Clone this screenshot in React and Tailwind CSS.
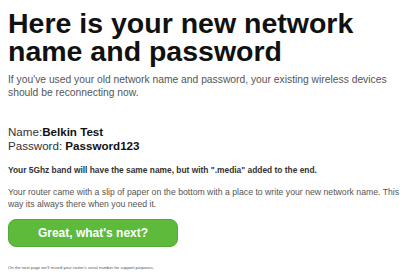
export default function App() {
    return (
        <div className="w-[404px] h-[276px] overflow-hidden bg-white pl-2 pr-[5px] font-['Liberation_Sans',Arial,sans-serif]">
            {/* Heading */}
            <h1 className="pt-[9px] text-[28.5px] leading-[28px] font-bold text-[#111]">
                Here is your new network name and password
            </h1>
            <p className="mt-[9px] text-[10.3px] leading-[12.5px] text-[#555]">
                If you've used your old network name and password, your existing wireless devices should be reconnecting now.
            </p>

            {/* Credentials */}
            <div className="mt-[26px] text-[11.6px] leading-[13.5px] text-[#111]">
                <p>
                    <span className="text-[#333]">Name:</span>
                    <span className="font-bold">Belkin Test</span>
                </p>
                <p>
                    <span className="text-[#333]">Password: </span>
                    <span className="font-bold">Password123</span>
                </p>
            </div>

            <p className="mt-[13px] text-[8.4px] leading-[11px] font-bold text-[#333]">
                Your 5Ghz band will have the same name, but with ".media" added to the end.
            </p>
            <p className="mt-[11px] whitespace-nowrap text-[8.7px] leading-[11.5px] text-[#555]">
                Your router came with a slip of paper on the bottom with a place to write your new network name. This
                <br />
                way its always there when you need it.
            </p>

            <button
                type="button"
                className="mt-[9px] w-[170px] h-[28px] rounded-[8px] bg-[#5dba3b] border border-[#53a935] text-white text-[12px] font-bold"
            >
                Great, what's next?
            </button>

            <p className="mt-[18px] text-[4.2px] leading-[6px] text-[#555]">
                On the next page we'll record your router's serial number for support purposes.
            </p>
        </div>
    );
}
